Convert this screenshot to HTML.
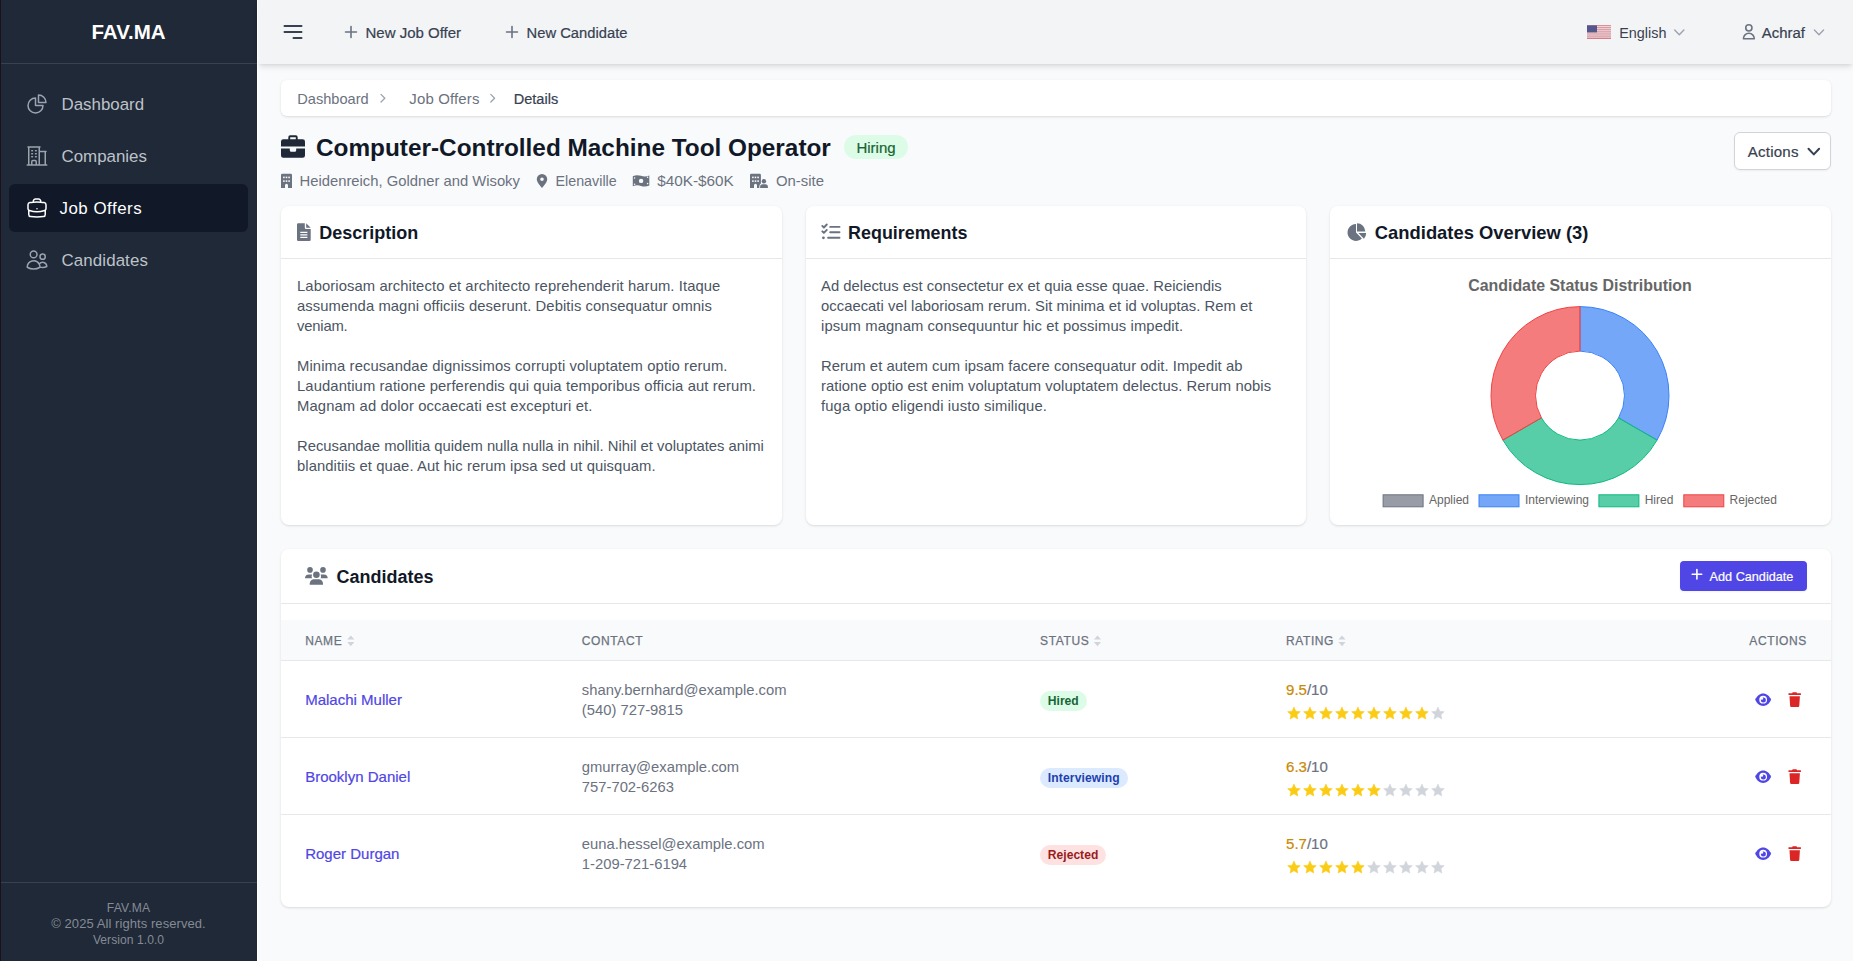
<!DOCTYPE html>
<html><head><meta charset="utf-8">
<style>
*{box-sizing:border-box;margin:0;padding:0}
html,body{width:1853px;height:961px;overflow:hidden}
body{font-family:"Liberation Sans",sans-serif;background:#f9fafb;position:relative}
.a{position:absolute;white-space:nowrap;line-height:1}
</style></head><body>
<div style="position:absolute;left:0px;top:0px;width:257px;height:961px;background:#1f2937;border-radius:0px;"></div>
<div style="position:absolute;left:0px;top:0px;width:1px;height:961px;background:#1b1117;border-radius:0px;"></div>
<div style="position:absolute;left:1px;top:63px;width:256px;height:1px;background:#374151;border-radius:0px;"></div>
<div class="a" style="left:0.5px;width:256px;text-align:center;top:22px;font-size:20.5px;color:#fff;font-weight:700;">FAV.MA</div>
<div style="position:absolute;left:9px;top:184px;width:239px;height:48px;background:#111827;border-radius:6px;"></div>
<div class="a" style="left:61.5px;top:97px;font-size:16.9px;color:#bec2c9;font-weight:400;letter-spacing:0px">Dashboard</div>
<div class="a" style="left:61.5px;top:149px;font-size:16.9px;color:#bec2c9;font-weight:400;letter-spacing:0px">Companies</div>
<div class="a" style="left:59.5px;top:201px;font-size:16.9px;color:#fff;font-weight:400;letter-spacing:0.5px">Job Offers</div>
<div class="a" style="left:61.5px;top:253px;font-size:16.9px;color:#bec2c9;font-weight:400;letter-spacing:0.1px">Candidates</div>
<div style="position:absolute;left:1px;top:882px;width:256px;height:1px;background:#374151;border-radius:0px;"></div>
<div class="a" style="left:0.5px;width:256px;text-align:center;top:902px;font-size:12.1px;color:#858b96;font-weight:400;letter-spacing:0.2px">FAV.MA</div>
<div class="a" style="left:0.5px;width:256px;text-align:center;top:917px;font-size:13px;color:#858b96;font-weight:400;letter-spacing:0.07px">© 2025 All rights reserved.</div>
<div class="a" style="left:0.5px;width:256px;text-align:center;top:934px;font-size:12.1px;color:#858b96;font-weight:400;letter-spacing:0.05px">Version 1.0.0</div>
<div style="position:absolute;left:258px;top:0px;width:1595px;height:64px;background:#f3f4f6;border-radius:0px;box-shadow:0 4px 6px -1px rgba(0,0,0,.1),0 2px 4px -2px rgba(0,0,0,.1)"></div>
<div style="position:absolute;left:257px;top:0px;width:1px;height:961px;background:#ffffff;border-radius:0px;"></div>
<div class="a" style="left:365.5px;top:25px;font-size:15px;color:#374151;font-weight:400;-webkit-text-stroke:0.2px #374151">New Job Offer</div>
<div class="a" style="left:526.6px;top:26px;font-size:14.75px;color:#374151;font-weight:400;-webkit-text-stroke:0.2px #374151">New Candidate</div>
<div class="a" style="left:1619.2px;top:26px;font-size:14.4px;color:#374151;font-weight:400;">English</div>
<div class="a" style="left:1761.8px;top:26px;font-size:14.9px;color:#374151;font-weight:400;-webkit-text-stroke:0.2px #374151">Achraf</div>
<div style="position:absolute;left:281px;top:80px;width:1550px;height:36px;background:#fff;border-radius:6px;box-shadow:0 1px 3px 0 rgba(0,0,0,.1),0 1px 2px -1px rgba(0,0,0,.1)"></div>
<div class="a" style="left:297.3px;top:92px;font-size:14.6px;color:#6b7280;font-weight:400;">Dashboard</div>
<div class="a" style="left:409.3px;top:92px;font-size:14.97px;color:#6b7280;font-weight:400;letter-spacing:0.15px">Job Offers</div>
<div class="a" style="left:513.7px;top:92px;font-size:14.56px;color:#374151;font-weight:400;-webkit-text-stroke:0.2px #374151">Details</div>
<div class="a" style="left:316.0px;top:136px;font-size:24.35px;color:#111827;font-weight:700;">Computer-Controlled Machine Tool Operator</div>
<div style="position:absolute;left:844px;top:135px;width:64px;height:24px;background:#dcfce7;border-radius:12px;"></div>
<div class="a" style="left:856.4px;top:140px;font-size:15px;color:#166534;font-weight:400;-webkit-text-stroke:0.2px #166534">Hiring</div>
<div class="a" style="left:299.5px;top:174px;font-size:14.8px;color:#6b7280;font-weight:400;">Heidenreich, Goldner and Wisoky</div>
<div class="a" style="left:555.5px;top:174px;font-size:14.3px;color:#6b7280;font-weight:400;">Elenaville</div>
<div class="a" style="left:657.2px;top:173px;font-size:15.3px;color:#6b7280;font-weight:400;">$40K-$60K</div>
<div class="a" style="left:776.0px;top:174px;font-size:14.9px;color:#6b7280;font-weight:400;">On-site</div>
<div style="position:absolute;left:1734px;top:132px;width:97px;height:38px;background:#fff;border-radius:6px;border:1px solid #d1d5db;box-shadow:0 1px 2px 0 rgba(0,0,0,.05)"></div>
<div class="a" style="left:1747.8px;top:144px;font-size:15.1px;color:#374151;font-weight:400;letter-spacing:0.2px;-webkit-text-stroke:0.2px #374151">Actions</div>
<div style="position:absolute;left:281px;top:206px;width:501px;height:319px;background:#fff;border-radius:8px;box-shadow:0 1px 3px 0 rgba(0,0,0,.1),0 1px 2px -1px rgba(0,0,0,.1)"></div>
<div style="position:absolute;left:281px;top:258px;width:501px;height:1px;background:#e5e7eb;border-radius:0px;"></div>
<div class="a" style="left:319.2px;top:224px;font-size:18px;color:#111827;font-weight:700;">Description</div>
<div style="position:absolute;left:806px;top:206px;width:500px;height:319px;background:#fff;border-radius:8px;box-shadow:0 1px 3px 0 rgba(0,0,0,.1),0 1px 2px -1px rgba(0,0,0,.1)"></div>
<div style="position:absolute;left:806px;top:258px;width:500px;height:1px;background:#e5e7eb;border-radius:0px;"></div>
<div class="a" style="left:848.1px;top:225px;font-size:17.9px;color:#111827;font-weight:700;">Requirements</div>
<div style="position:absolute;left:1330px;top:206px;width:501px;height:319px;background:#fff;border-radius:8px;box-shadow:0 1px 3px 0 rgba(0,0,0,.1),0 1px 2px -1px rgba(0,0,0,.1)"></div>
<div style="position:absolute;left:1330px;top:258px;width:501px;height:1px;background:#e5e7eb;border-radius:0px;"></div>
<div class="a" style="left:1374.8px;top:224px;font-size:18.4px;color:#111827;font-weight:700;">Candidates Overview (3)</div>
<div class="a" style="left:297.0px;top:279px;font-size:14.8px;color:#4b5563;font-weight:400;letter-spacing:0.089px">Laboriosam architecto et architecto reprehenderit harum. Itaque</div>
<div class="a" style="left:297.0px;top:299px;font-size:14.8px;color:#4b5563;font-weight:400;letter-spacing:0.08px">assumenda magni officiis deserunt. Debitis consequatur omnis</div>
<div class="a" style="left:297.0px;top:319px;font-size:14.8px;color:#4b5563;font-weight:400;letter-spacing:-0.18px">veniam.</div>
<div class="a" style="left:297.0px;top:359px;font-size:14.8px;color:#4b5563;font-weight:400;letter-spacing:0.113px">Minima recusandae dignissimos corrupti voluptatem optio rerum.</div>
<div class="a" style="left:297.0px;top:379px;font-size:14.8px;color:#4b5563;font-weight:400;letter-spacing:0.101px">Laudantium ratione perferendis qui quia temporibus officia aut rerum.</div>
<div class="a" style="left:297.0px;top:399px;font-size:14.8px;color:#4b5563;font-weight:400;letter-spacing:0.121px">Magnam ad dolor occaecati est excepturi et.</div>
<div class="a" style="left:297.0px;top:439px;font-size:14.8px;color:#4b5563;font-weight:400;letter-spacing:-0.004px">Recusandae mollitia quidem nulla nulla in nihil. Nihil et voluptates animi</div>
<div class="a" style="left:297.0px;top:459px;font-size:14.8px;color:#4b5563;font-weight:400;letter-spacing:0.074px">blanditiis et quae. Aut hic rerum ipsa sed ut quisquam.</div>
<div class="a" style="left:821.0px;top:279px;font-size:14.8px;color:#4b5563;font-weight:400;letter-spacing:0.031px">Ad delectus est consectetur ex et quia esse quae. Reiciendis</div>
<div class="a" style="left:821.0px;top:299px;font-size:14.8px;color:#4b5563;font-weight:400;letter-spacing:0.034px">occaecati vel laboriosam rerum. Sit minima et id voluptas. Rem et</div>
<div class="a" style="left:821.0px;top:319px;font-size:14.8px;color:#4b5563;font-weight:400;letter-spacing:0.104px">ipsum magnam consequuntur hic et possimus impedit.</div>
<div class="a" style="left:821.0px;top:359px;font-size:14.8px;color:#4b5563;font-weight:400;letter-spacing:0.061px">Rerum et autem cum ipsam facere consequatur odit. Impedit ab</div>
<div class="a" style="left:821.0px;top:379px;font-size:14.8px;color:#4b5563;font-weight:400;letter-spacing:0.066px">ratione optio est enim voluptatum voluptatem delectus. Rerum nobis</div>
<div class="a" style="left:821.0px;top:399px;font-size:14.8px;color:#4b5563;font-weight:400;letter-spacing:0.131px">fuga optio eligendi iusto similique.</div>
<div class="a" style="left:1380.0px;width:400px;text-align:center;top:278px;font-size:15.92px;color:#666;font-weight:700;">Candidate Status Distribution</div>
<div class="a" style="left:1429.0px;top:494px;font-size:12px;color:#666;font-weight:400;">Applied</div>
<div class="a" style="left:1525.0px;top:494px;font-size:12px;color:#666;font-weight:400;">Interviewing</div>
<div class="a" style="left:1644.7px;top:494px;font-size:12px;color:#666;font-weight:400;">Hired</div>
<div class="a" style="left:1729.6px;top:494px;font-size:12px;color:#666;font-weight:400;">Rejected</div>
<div style="position:absolute;left:281px;top:549px;width:1550px;height:358px;background:#fff;border-radius:8px;box-shadow:0 1px 3px 0 rgba(0,0,0,.1),0 1px 2px -1px rgba(0,0,0,.1)"></div>
<div style="position:absolute;left:281px;top:603px;width:1550px;height:1px;background:#e5e7eb;border-radius:0px;"></div>
<div class="a" style="left:336.4px;top:568px;font-size:18px;color:#111827;font-weight:700;">Candidates</div>
<div style="position:absolute;left:1680px;top:561px;width:127px;height:30px;background:#4f46e5;border-radius:4px;box-shadow:0 1px 2px 0 rgba(0,0,0,.05)"></div>
<div class="a" style="left:1709.6px;top:571px;font-size:12.67px;color:#fff;font-weight:400;-webkit-text-stroke:0.2px #fff">Add Candidate</div>
<div style="position:absolute;left:281px;top:620px;width:1550px;height:40px;background:#f9fafb;border-radius:0px;"></div>
<div style="position:absolute;left:281px;top:660px;width:1550px;height:1px;background:#e5e7eb;border-radius:0px;"></div>
<div class="a" style="left:305.2px;top:635px;font-size:12px;color:#6b7280;font-weight:400;letter-spacing:0.6px;-webkit-text-stroke:0.25px #6b7280">NAME</div>
<div class="a" style="left:581.8px;top:635px;font-size:12px;color:#6b7280;font-weight:400;letter-spacing:0.6px;-webkit-text-stroke:0.25px #6b7280">CONTACT</div>
<div class="a" style="left:1040.1px;top:635px;font-size:12px;color:#6b7280;font-weight:400;letter-spacing:0.6px;-webkit-text-stroke:0.25px #6b7280">STATUS</div>
<div class="a" style="left:1286.0px;top:635px;font-size:12px;color:#6b7280;font-weight:400;letter-spacing:0.6px;-webkit-text-stroke:0.25px #6b7280">RATING</div>
<div class="a" style="right:46.1px;top:635px;font-size:12px;color:#6b7280;font-weight:400;letter-spacing:0.6px;-webkit-text-stroke:0.25px #6b7280">ACTIONS</div>
<div style="position:absolute;left:281px;top:737px;width:1550px;height:1px;background:#e5e7eb;border-radius:0px;"></div>
<div class="a" style="left:305.2px;top:692px;font-size:15px;color:#4f46e5;font-weight:400;-webkit-text-stroke:0.2px #4f46e5">Malachi Muller</div>
<div class="a" style="left:581.8px;top:683px;font-size:14.8px;color:#6b7280;font-weight:400;">shany.bernhard@example.com</div>
<div class="a" style="left:581.8px;top:703px;font-size:14.8px;color:#6b7280;font-weight:400;">(540) 727-9815</div>
<div style="position:absolute;left:1040px;top:691px;width:47px;height:20px;background:#dcfce7;border-radius:10px;"></div>
<div class="a" style="left:1047.8px;top:695px;font-size:12.12px;color:#166534;font-weight:700;">Hired</div>
<div class="a" style="left:1286.1px;top:682px;font-size:15px;color:#6b7280;-webkit-text-stroke:0.2px"><span style="color:#ca8a04">9.5</span>/10</div>
<div style="position:absolute;left:281px;top:814px;width:1550px;height:1px;background:#e5e7eb;border-radius:0px;"></div>
<div class="a" style="left:305.2px;top:769px;font-size:15px;color:#4f46e5;font-weight:400;-webkit-text-stroke:0.2px #4f46e5">Brooklyn Daniel</div>
<div class="a" style="left:581.8px;top:760px;font-size:14.8px;color:#6b7280;font-weight:400;">gmurray@example.com</div>
<div class="a" style="left:581.8px;top:780px;font-size:14.8px;color:#6b7280;font-weight:400;">757-702-6263</div>
<div style="position:absolute;left:1040px;top:768px;width:87.5px;height:20px;background:#dbeafe;border-radius:10px;"></div>
<div class="a" style="left:1047.8px;top:772px;font-size:12.12px;color:#1e40af;font-weight:700;letter-spacing:0.12px">Interviewing</div>
<div class="a" style="left:1286.1px;top:759px;font-size:15px;color:#6b7280;-webkit-text-stroke:0.2px"><span style="color:#ca8a04">6.3</span>/10</div>
<div class="a" style="left:305.2px;top:846px;font-size:15px;color:#4f46e5;font-weight:400;-webkit-text-stroke:0.2px #4f46e5">Roger Durgan</div>
<div class="a" style="left:581.8px;top:837px;font-size:14.8px;color:#6b7280;font-weight:400;">euna.hessel@example.com</div>
<div class="a" style="left:581.8px;top:857px;font-size:14.8px;color:#6b7280;font-weight:400;">1-209-721-6194</div>
<div style="position:absolute;left:1040px;top:845px;width:66px;height:20px;background:#fee2e2;border-radius:10px;"></div>
<div class="a" style="left:1047.8px;top:849px;font-size:12.12px;color:#991b1b;font-weight:700;">Rejected</div>
<div class="a" style="left:1286.1px;top:836px;font-size:15px;color:#6b7280;-webkit-text-stroke:0.2px"><span style="color:#ca8a04">5.7</span>/10</div>
<svg width="1853" height="961" style="position:absolute;left:0;top:0">
<g transform="translate(25 92)" fill="none" stroke="#9ca3af" stroke-width="1.5" stroke-linecap="round" stroke-linejoin="round"><path d="M10.5 6a7.5 7.5 0 1 0 7.5 7.5h-7.5V6Z"/><path d="M13.5 10.5H21A7.5 7.5 0 0 0 13.5 3v7.5Z"/></g>
<g transform="translate(25 144)" fill="none" stroke="#9ca3af" stroke-width="1.5" stroke-linecap="round" stroke-linejoin="round"><path d="M2.25 21h19.5m-18-18v18m10.5-18v18m6-13.5V21M6.75 6.75h.75m-.75 3h.75m-.75 3h.75m3-6h.75m-.75 3h.75m-.75 3h.75M6.75 21v-3.375c0-.621.504-1.125 1.125-1.125h2.25c.621 0 1.125.504 1.125 1.125V21M3 3h12m-.75 4.5H21"/></g>
<g transform="translate(25 196)" fill="none" stroke="#fff" stroke-width="1.5" stroke-linecap="round" stroke-linejoin="round"><path d="M20.25 14.15v4.25c0 1.094-.787 2.036-1.872 2.18-2.087.277-4.216.42-6.378.42s-4.291-.143-6.378-.42c-1.085-.144-1.872-1.086-1.872-2.18v-4.25m16.5 0a2.18 2.18 0 0 0 .75-1.661V8.706c0-1.081-.768-2.015-1.837-2.175a48.114 48.114 0 0 0-3.413-.387m4.5 8.006c-.194.165-.42.295-.673.38A23.978 23.978 0 0 1 12 15.75c-2.648 0-5.195-.429-7.577-1.22a2.016 2.016 0 0 1-.673-.38m0 0A2.18 2.18 0 0 1 3 12.489V8.706c0-1.081.768-2.015 1.837-2.175a48.111 48.111 0 0 1 3.413-.387m7.5 0V5.25A2.25 2.25 0 0 0 13.5 3h-3a2.25 2.25 0 0 0-2.25 2.25v.894m7.5 0a48.667 48.667 0 0 0-7.5 0M12 12.75h.008v.008H12v-.008Z"/></g>
<g transform="translate(25 248)" fill="none" stroke="#9ca3af" stroke-width="1.5" stroke-linecap="round" stroke-linejoin="round"><path d="M15 19.128a9.38 9.38 0 0 0 2.625.372 9.337 9.337 0 0 0 4.121-.952 4.125 4.125 0 0 0-7.533-2.493M15 19.128v-.003c0-1.113-.285-2.16-.786-3.07M15 19.128v.106A12.318 12.318 0 0 1 8.624 21c-2.331 0-4.512-.645-6.374-1.766l-.001-.109a6.375 6.375 0 0 1 11.964-3.07M12 6.375a3.375 3.375 0 1 1-6.75 0 3.375 3.375 0 0 1 6.75 0Zm8.25 2.25a2.625 2.625 0 1 1-5.25 0 2.625 2.625 0 0 1 5.25 0Z"/></g>
<g stroke="#374151" stroke-width="2" stroke-linecap="round"><path d="M284.5 26h17M284.5 32h17M293.5 38h8"/></g>
<path d="M351 26.5v11M345.5 32h11" stroke="#6b7280" stroke-width="1.6" stroke-linecap="round" fill="none"/>
<path d="M512 26.5v11M506.5 32h11" stroke="#6b7280" stroke-width="1.6" stroke-linecap="round" fill="none"/>
<path d="M1674.7 30l4.6 4.8 4.6-4.8" stroke="#9ca3af" stroke-width="1.4" fill="none" stroke-linecap="round" stroke-linejoin="round"/>
<path d="M1814.4 30l4.6 4.8 4.6-4.8" stroke="#9ca3af" stroke-width="1.4" fill="none" stroke-linecap="round" stroke-linejoin="round"/>
<g transform="translate(1739.5 22.4) scale(0.78)" fill="none" stroke="#6b7280" stroke-width="2" stroke-linecap="round" stroke-linejoin="round"><path d="M16 7a4 4 0 11-8 0 4 4 0 018 0zM12 14a7 7 0 00-7 7h14a7 7 0 00-7-7z"/></g>
<g transform="translate(1587 25.4)"><rect y="0.00" width="24" height="1.04" fill="#c8505f"/><rect y="1.02" width="24" height="1.04" fill="#f4f4f6"/><rect y="2.05" width="24" height="1.04" fill="#c8505f"/><rect y="3.07" width="24" height="1.04" fill="#f4f4f6"/><rect y="4.09" width="24" height="1.04" fill="#c8505f"/><rect y="5.12" width="24" height="1.04" fill="#f4f4f6"/><rect y="6.14" width="24" height="1.04" fill="#c8505f"/><rect y="7.16" width="24" height="1.04" fill="#f4f4f6"/><rect y="8.18" width="24" height="1.04" fill="#c8505f"/><rect y="9.21" width="24" height="1.04" fill="#f4f4f6"/><rect y="10.23" width="24" height="1.04" fill="#c8505f"/><rect y="11.25" width="24" height="1.04" fill="#f4f4f6"/><rect y="12.28" width="24" height="1.04" fill="#c8505f"/><rect width="10" height="7" fill="#55578c"/></g>
<path d="M381 94.4l3.8 3.8-3.8 3.8" stroke="#9ca3af" stroke-width="1.3" fill="none" stroke-linecap="round" stroke-linejoin="round"/>
<path d="M490.8 94.4l3.8 3.8-3.8 3.8" stroke="#9ca3af" stroke-width="1.3" fill="none" stroke-linecap="round" stroke-linejoin="round"/>
<g fill="#1f2937"><path d="M288.3 141V137.2a1.9 1.9 0 0 1 1.9-1.9h5.6a1.9 1.9 0 0 1 1.9 1.9V141h-1.9v-3.7h-5.6V141z"/><path d="M283.3 139.3h19.4a2.3 2.3 0 0 1 2.3 2.3v5h-24v-5a2.3 2.3 0 0 1 2.3-2.3z"/><path d="M281 148.5h8.8v1.7a1.5 1.5 0 0 0 1.5 1.5h3.4a1.5 1.5 0 0 0 1.5-1.5v-1.7h8.8v7a2.3 2.3 0 0 1-2.3 2.3h-19.4a2.3 2.3 0 0 1-2.3-2.3z"/></g>
<g fill="#6b7280"><path d="M282.3 173.8h8.4a1.3 1.3 0 0 1 1.3 1.3V188h-4v-2.8a1.5 1.5 0 0 0-3 0V188h-4V175.1a1.3 1.3 0 0 1 1.3-1.3z"/></g>
<rect x="283.1" y="176.6" width="1.6" height="1.6" fill="#f9fafb"/>
<rect x="285.7" y="176.6" width="1.6" height="1.6" fill="#f9fafb"/>
<rect x="288.3" y="176.6" width="1.6" height="1.6" fill="#f9fafb"/>
<rect x="283.1" y="180.3" width="1.6" height="1.6" fill="#f9fafb"/>
<rect x="285.7" y="180.3" width="1.6" height="1.6" fill="#f9fafb"/>
<rect x="288.3" y="180.3" width="1.6" height="1.6" fill="#f9fafb"/>
<path d="M542 174a5.25 5.25 0 0 0-5.25 5.25c0 3.2 5.25 8.75 5.25 8.75s5.25-5.55 5.25-8.75A5.25 5.25 0 0 0 542 174zm0 3.4a1.8 1.8 0 1 1 0 3.6 1.8 1.8 0 0 1 0-3.6z" fill="#6b7280" fill-rule="evenodd"/>
<path d="M632.8 176.2c2.7-1.3 5.5-1.3 8.2-.4 2.7.9 5.5.9 8.3-.4v10.1c-2.8 1.3-5.6 1.3-8.3.4-2.7-.9-5.5-.9-8.2.4z" fill="#6b7280"/>
<circle cx="641.1" cy="180.9" r="2.2" fill="#f9fafb"/>
<circle cx="634.6" cy="178" r="0.8" fill="#f9fafb"/>
<circle cx="647.6" cy="177.2" r="0.8" fill="#f9fafb"/>
<circle cx="634.6" cy="184.3" r="0.8" fill="#f9fafb"/>
<circle cx="647.6" cy="183.6" r="0.8" fill="#f9fafb"/>
<path d="M751.3 173.8h8.3a1.3 1.3 0 0 1 1.3 1.3V183.5a3.5 3.5 0 0 0-1.6 3v1.5h-2.3v-2.8a1.5 1.5 0 0 0-3 0V188h-4V175.1a1.3 1.3 0 0 1 1.3-1.3z" fill="#6b7280"/>
<rect x="752.1" y="176.6" width="1.6" height="1.6" fill="#f9fafb"/>
<rect x="754.7" y="176.6" width="1.6" height="1.6" fill="#f9fafb"/>
<rect x="757.3" y="176.6" width="1.6" height="1.6" fill="#f9fafb"/>
<rect x="752.1" y="180.3" width="1.6" height="1.6" fill="#f9fafb"/>
<rect x="754.7" y="180.3" width="1.6" height="1.6" fill="#f9fafb"/>
<rect x="757.3" y="180.3" width="1.6" height="1.6" fill="#f9fafb"/>
<circle cx="763.9" cy="181.2" r="2.2" fill="#6b7280"/><path d="M760.1 188v-1.3a2.5 2.5 0 0 1 2.5-2.5h2.8a2.5 2.5 0 0 1 2.5 2.5V188z" fill="#6b7280"/>
<path d="M1808.5 148.8l5.3 5.6 5.3-5.6" stroke="#374151" stroke-width="2" fill="none" stroke-linecap="round" stroke-linejoin="round"/>
<path d="M298.3 223.2h6.5v4.6a1.3 1.3 0 0 0 1.3 1.3h4.6v10.7a1.3 1.3 0 0 1-1.3 1.3h-11.1a1.3 1.3 0 0 1-1.3-1.3v-15.3a1.3 1.3 0 0 1 1.3-1.3z" fill="#6b7280"/><path d="M306.2 223.2l4.5 4.5h-4.5z" fill="#6b7280"/><path d="M300.3 232.4h7.1M300.3 234.9h7.1M300.3 237.4h7.1" stroke="#fff" stroke-width="1.15"/>
<g stroke="#6b7280" stroke-width="1.9" fill="none" stroke-linecap="round" stroke-linejoin="round"><path d="M822.3 225.9l1.6 1.6 2.9-3M822.3 231.3l1.6 1.6 2.9-3"/><path d="M830.2 226.9h9.3M830.2 232.2h9.3M828.1 237.8h11.4"/></g><circle cx="823.4" cy="237.8" r="1.4" fill="#6b7280"/>
<g fill="#6b7280"><path d="M1356 232.5V224.1A8.4 8.4 0 1 0 1361.9 238.4z"/><path d="M1357 223.2A8.3 8.3 0 0 1 1365.3 231.5H1357z"/><path d="M1358.4 233.1H1366.2A8.2 8.2 0 0 1 1363.9 238.7z"/></g>
<path d="M1580.00 306.60A89 89 0 0 1 1657.08 440.10L1618.54 417.85A44.5 44.5 0 0 0 1580.00 351.10Z" fill="rgba(59,130,246,0.7)" stroke="#3b82f6" stroke-width="1"/>
<path d="M1657.08 440.10A89 89 0 0 1 1502.92 440.10L1541.46 417.85A44.5 44.5 0 0 0 1618.54 417.85Z" fill="rgba(16,185,129,0.7)" stroke="#10b981" stroke-width="1"/>
<path d="M1502.92 440.10A89 89 0 0 1 1580.00 306.60L1580.00 351.10A44.5 44.5 0 0 0 1541.46 417.85Z" fill="rgba(239,68,68,0.7)" stroke="#ef4444" stroke-width="1"/>
<rect x="1383.1" y="494.8" width="40" height="12" fill="rgba(107,114,128,0.7)" stroke="#6b7280" stroke-width="1"/>
<rect x="1479.0" y="494.8" width="40" height="12" fill="rgba(59,130,246,0.7)" stroke="#3b82f6" stroke-width="1"/>
<rect x="1598.9" y="494.8" width="40" height="12" fill="rgba(16,185,129,0.7)" stroke="#10b981" stroke-width="1"/>
<rect x="1683.8" y="494.8" width="40" height="12" fill="rgba(239,68,68,0.7)" stroke="#ef4444" stroke-width="1"/>
<g fill="#6b7280"><circle cx="310" cy="569.9" r="2.8"/><circle cx="323" cy="569.9" r="2.8"/><circle cx="316.4" cy="574.8" r="3.3"/><path d="M305 578.3a3.9 3.9 0 0 1 3.9-3.9h3.2a4.6 4.6 0 0 0-.1 3.9z"/><path d="M327.7 578.3a3.9 3.9 0 0 0-3.9-3.9h-3.2a4.6 4.6 0 0 1 .1 3.9z"/><path d="M309.7 584.8v-1.2a4.3 4.3 0 0 1 4.3-4.3h4.7a4.3 4.3 0 0 1 4.3 4.3v1.2z"/></g>
<path d="M1696.9 569.5v9.5M1692.2 574.2h9.5" stroke="#fff" stroke-width="1.6" stroke-linecap="round"/>
<path d="M350.8 635.4l3.6 4.2h-7.2zM350.8 646.2l3.6-4.2h-7.2z" fill="#d1d5db"/>
<path d="M1097.5 635.4l3.6 4.2h-7.2zM1097.5 646.2l3.6-4.2h-7.2z" fill="#d1d5db"/>
<path d="M1342 635.4l3.6 4.2h-7.2zM1342 646.2l3.6-4.2h-7.2z" fill="#d1d5db"/>
<polygon points="1293.95,707.10 1295.77,711.19 1300.23,711.66 1296.90,714.66 1297.83,719.04 1293.95,716.80 1290.07,719.04 1291.00,714.66 1287.67,711.66 1292.13,711.19" fill="#facc15" stroke="#facc15" stroke-width="0.6" stroke-linejoin="round"/>
<polygon points="1309.95,707.10 1311.77,711.19 1316.23,711.66 1312.90,714.66 1313.83,719.04 1309.95,716.80 1306.07,719.04 1307.00,714.66 1303.67,711.66 1308.13,711.19" fill="#facc15" stroke="#facc15" stroke-width="0.6" stroke-linejoin="round"/>
<polygon points="1325.95,707.10 1327.77,711.19 1332.23,711.66 1328.90,714.66 1329.83,719.04 1325.95,716.80 1322.07,719.04 1323.00,714.66 1319.67,711.66 1324.13,711.19" fill="#facc15" stroke="#facc15" stroke-width="0.6" stroke-linejoin="round"/>
<polygon points="1341.95,707.10 1343.77,711.19 1348.23,711.66 1344.90,714.66 1345.83,719.04 1341.95,716.80 1338.07,719.04 1339.00,714.66 1335.67,711.66 1340.13,711.19" fill="#facc15" stroke="#facc15" stroke-width="0.6" stroke-linejoin="round"/>
<polygon points="1357.95,707.10 1359.77,711.19 1364.23,711.66 1360.90,714.66 1361.83,719.04 1357.95,716.80 1354.07,719.04 1355.00,714.66 1351.67,711.66 1356.13,711.19" fill="#facc15" stroke="#facc15" stroke-width="0.6" stroke-linejoin="round"/>
<polygon points="1373.95,707.10 1375.77,711.19 1380.23,711.66 1376.90,714.66 1377.83,719.04 1373.95,716.80 1370.07,719.04 1371.00,714.66 1367.67,711.66 1372.13,711.19" fill="#facc15" stroke="#facc15" stroke-width="0.6" stroke-linejoin="round"/>
<polygon points="1389.95,707.10 1391.77,711.19 1396.23,711.66 1392.90,714.66 1393.83,719.04 1389.95,716.80 1386.07,719.04 1387.00,714.66 1383.67,711.66 1388.13,711.19" fill="#facc15" stroke="#facc15" stroke-width="0.6" stroke-linejoin="round"/>
<polygon points="1405.95,707.10 1407.77,711.19 1412.23,711.66 1408.90,714.66 1409.83,719.04 1405.95,716.80 1402.07,719.04 1403.00,714.66 1399.67,711.66 1404.13,711.19" fill="#facc15" stroke="#facc15" stroke-width="0.6" stroke-linejoin="round"/>
<polygon points="1421.95,707.10 1423.77,711.19 1428.23,711.66 1424.90,714.66 1425.83,719.04 1421.95,716.80 1418.07,719.04 1419.00,714.66 1415.67,711.66 1420.13,711.19" fill="#facc15" stroke="#facc15" stroke-width="0.6" stroke-linejoin="round"/>
<polygon points="1437.95,707.10 1439.77,711.19 1444.23,711.66 1440.90,714.66 1441.83,719.04 1437.95,716.80 1434.07,719.04 1435.00,714.66 1431.67,711.66 1436.13,711.19" fill="#d1d5db" stroke="#d1d5db" stroke-width="0.6" stroke-linejoin="round"/>
<path d="M1755.2 699.7c1.6-3.8 4.6-6.2 7.95-6.2s6.35 2.4 7.95 6.2c-1.6 3.8-4.6 6.2-7.95 6.2s-6.35-2.4-7.95-6.2z" fill="#4f46e5"/><circle cx="1763.15" cy="699.7" r="3.9" fill="#fff"/><circle cx="1763.35" cy="699.9000000000001" r="2.5" fill="#4f46e5"/><circle cx="1761.9" cy="698.5" r="1.25" fill="#fff"/>
<path d="M1788.5 693.2h3.6l.6-1h3.8l.6 1h3.8v1.7h-12.4z" fill="#dc2626"/><path d="M1789.5 696.2h10.4l-.6 9.5a1.2 1.2 0 0 1-1.2 1.2h-6.8a1.2 1.2 0 0 1-1.2-1.2z" fill="#dc2626"/>
<polygon points="1293.95,784.10 1295.77,788.19 1300.23,788.66 1296.90,791.66 1297.83,796.04 1293.95,793.80 1290.07,796.04 1291.00,791.66 1287.67,788.66 1292.13,788.19" fill="#facc15" stroke="#facc15" stroke-width="0.6" stroke-linejoin="round"/>
<polygon points="1309.95,784.10 1311.77,788.19 1316.23,788.66 1312.90,791.66 1313.83,796.04 1309.95,793.80 1306.07,796.04 1307.00,791.66 1303.67,788.66 1308.13,788.19" fill="#facc15" stroke="#facc15" stroke-width="0.6" stroke-linejoin="round"/>
<polygon points="1325.95,784.10 1327.77,788.19 1332.23,788.66 1328.90,791.66 1329.83,796.04 1325.95,793.80 1322.07,796.04 1323.00,791.66 1319.67,788.66 1324.13,788.19" fill="#facc15" stroke="#facc15" stroke-width="0.6" stroke-linejoin="round"/>
<polygon points="1341.95,784.10 1343.77,788.19 1348.23,788.66 1344.90,791.66 1345.83,796.04 1341.95,793.80 1338.07,796.04 1339.00,791.66 1335.67,788.66 1340.13,788.19" fill="#facc15" stroke="#facc15" stroke-width="0.6" stroke-linejoin="round"/>
<polygon points="1357.95,784.10 1359.77,788.19 1364.23,788.66 1360.90,791.66 1361.83,796.04 1357.95,793.80 1354.07,796.04 1355.00,791.66 1351.67,788.66 1356.13,788.19" fill="#facc15" stroke="#facc15" stroke-width="0.6" stroke-linejoin="round"/>
<polygon points="1373.95,784.10 1375.77,788.19 1380.23,788.66 1376.90,791.66 1377.83,796.04 1373.95,793.80 1370.07,796.04 1371.00,791.66 1367.67,788.66 1372.13,788.19" fill="#facc15" stroke="#facc15" stroke-width="0.6" stroke-linejoin="round"/>
<polygon points="1389.95,784.10 1391.77,788.19 1396.23,788.66 1392.90,791.66 1393.83,796.04 1389.95,793.80 1386.07,796.04 1387.00,791.66 1383.67,788.66 1388.13,788.19" fill="#d1d5db" stroke="#d1d5db" stroke-width="0.6" stroke-linejoin="round"/>
<polygon points="1405.95,784.10 1407.77,788.19 1412.23,788.66 1408.90,791.66 1409.83,796.04 1405.95,793.80 1402.07,796.04 1403.00,791.66 1399.67,788.66 1404.13,788.19" fill="#d1d5db" stroke="#d1d5db" stroke-width="0.6" stroke-linejoin="round"/>
<polygon points="1421.95,784.10 1423.77,788.19 1428.23,788.66 1424.90,791.66 1425.83,796.04 1421.95,793.80 1418.07,796.04 1419.00,791.66 1415.67,788.66 1420.13,788.19" fill="#d1d5db" stroke="#d1d5db" stroke-width="0.6" stroke-linejoin="round"/>
<polygon points="1437.95,784.10 1439.77,788.19 1444.23,788.66 1440.90,791.66 1441.83,796.04 1437.95,793.80 1434.07,796.04 1435.00,791.66 1431.67,788.66 1436.13,788.19" fill="#d1d5db" stroke="#d1d5db" stroke-width="0.6" stroke-linejoin="round"/>
<path d="M1755.2 776.7c1.6-3.8 4.6-6.2 7.95-6.2s6.35 2.4 7.95 6.2c-1.6 3.8-4.6 6.2-7.95 6.2s-6.35-2.4-7.95-6.2z" fill="#4f46e5"/><circle cx="1763.15" cy="776.7" r="3.9" fill="#fff"/><circle cx="1763.35" cy="776.9000000000001" r="2.5" fill="#4f46e5"/><circle cx="1761.9" cy="775.5" r="1.25" fill="#fff"/>
<path d="M1788.5 770.2h3.6l.6-1h3.8l.6 1h3.8v1.7h-12.4z" fill="#dc2626"/><path d="M1789.5 773.2h10.4l-.6 9.5a1.2 1.2 0 0 1-1.2 1.2h-6.8a1.2 1.2 0 0 1-1.2-1.2z" fill="#dc2626"/>
<polygon points="1293.95,861.10 1295.77,865.19 1300.23,865.66 1296.90,868.66 1297.83,873.04 1293.95,870.80 1290.07,873.04 1291.00,868.66 1287.67,865.66 1292.13,865.19" fill="#facc15" stroke="#facc15" stroke-width="0.6" stroke-linejoin="round"/>
<polygon points="1309.95,861.10 1311.77,865.19 1316.23,865.66 1312.90,868.66 1313.83,873.04 1309.95,870.80 1306.07,873.04 1307.00,868.66 1303.67,865.66 1308.13,865.19" fill="#facc15" stroke="#facc15" stroke-width="0.6" stroke-linejoin="round"/>
<polygon points="1325.95,861.10 1327.77,865.19 1332.23,865.66 1328.90,868.66 1329.83,873.04 1325.95,870.80 1322.07,873.04 1323.00,868.66 1319.67,865.66 1324.13,865.19" fill="#facc15" stroke="#facc15" stroke-width="0.6" stroke-linejoin="round"/>
<polygon points="1341.95,861.10 1343.77,865.19 1348.23,865.66 1344.90,868.66 1345.83,873.04 1341.95,870.80 1338.07,873.04 1339.00,868.66 1335.67,865.66 1340.13,865.19" fill="#facc15" stroke="#facc15" stroke-width="0.6" stroke-linejoin="round"/>
<polygon points="1357.95,861.10 1359.77,865.19 1364.23,865.66 1360.90,868.66 1361.83,873.04 1357.95,870.80 1354.07,873.04 1355.00,868.66 1351.67,865.66 1356.13,865.19" fill="#facc15" stroke="#facc15" stroke-width="0.6" stroke-linejoin="round"/>
<polygon points="1373.95,861.10 1375.77,865.19 1380.23,865.66 1376.90,868.66 1377.83,873.04 1373.95,870.80 1370.07,873.04 1371.00,868.66 1367.67,865.66 1372.13,865.19" fill="#d1d5db" stroke="#d1d5db" stroke-width="0.6" stroke-linejoin="round"/>
<polygon points="1389.95,861.10 1391.77,865.19 1396.23,865.66 1392.90,868.66 1393.83,873.04 1389.95,870.80 1386.07,873.04 1387.00,868.66 1383.67,865.66 1388.13,865.19" fill="#d1d5db" stroke="#d1d5db" stroke-width="0.6" stroke-linejoin="round"/>
<polygon points="1405.95,861.10 1407.77,865.19 1412.23,865.66 1408.90,868.66 1409.83,873.04 1405.95,870.80 1402.07,873.04 1403.00,868.66 1399.67,865.66 1404.13,865.19" fill="#d1d5db" stroke="#d1d5db" stroke-width="0.6" stroke-linejoin="round"/>
<polygon points="1421.95,861.10 1423.77,865.19 1428.23,865.66 1424.90,868.66 1425.83,873.04 1421.95,870.80 1418.07,873.04 1419.00,868.66 1415.67,865.66 1420.13,865.19" fill="#d1d5db" stroke="#d1d5db" stroke-width="0.6" stroke-linejoin="round"/>
<polygon points="1437.95,861.10 1439.77,865.19 1444.23,865.66 1440.90,868.66 1441.83,873.04 1437.95,870.80 1434.07,873.04 1435.00,868.66 1431.67,865.66 1436.13,865.19" fill="#d1d5db" stroke="#d1d5db" stroke-width="0.6" stroke-linejoin="round"/>
<path d="M1755.2 853.7c1.6-3.8 4.6-6.2 7.95-6.2s6.35 2.4 7.95 6.2c-1.6 3.8-4.6 6.2-7.95 6.2s-6.35-2.4-7.95-6.2z" fill="#4f46e5"/><circle cx="1763.15" cy="853.7" r="3.9" fill="#fff"/><circle cx="1763.35" cy="853.9000000000001" r="2.5" fill="#4f46e5"/><circle cx="1761.9" cy="852.5" r="1.25" fill="#fff"/>
<path d="M1788.5 847.2h3.6l.6-1h3.8l.6 1h3.8v1.7h-12.4z" fill="#dc2626"/><path d="M1789.5 850.2h10.4l-.6 9.5a1.2 1.2 0 0 1-1.2 1.2h-6.8a1.2 1.2 0 0 1-1.2-1.2z" fill="#dc2626"/>
</svg></body></html>
